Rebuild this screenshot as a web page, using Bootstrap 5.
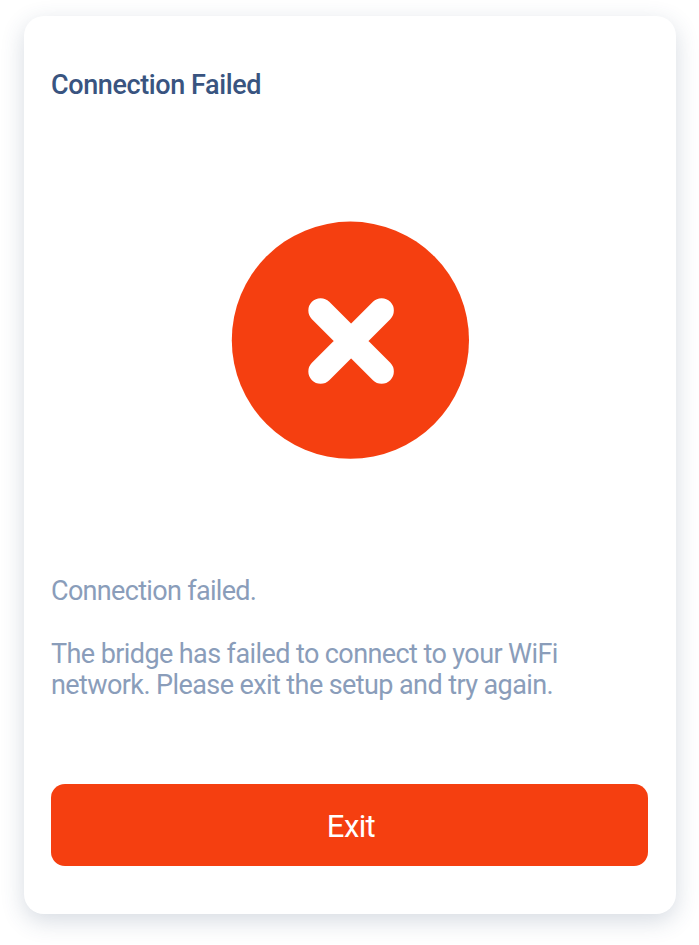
<!DOCTYPE html>
<html lang="en">
<head>
<meta charset="utf-8">
<meta name="viewport" content="width=device-width, initial-scale=1">
<title>Connection Failed</title>
<link href="https://cdn.jsdelivr.net/npm/bootstrap@5.3.0/dist/css/bootstrap.min.css" rel="stylesheet">
<style>
body{font-family:Roboto,sans-serif;background:#fff;height:945px;overflow:hidden;padding:15.5px 23.5px}
.dialog{width:652px;height:898px;border-radius:20px;padding:0 27.5px;box-shadow:0 7px 23px rgba(50,75,110,.2)}
.dialog-title{font-size:27px;line-height:32px;font-weight:500;color:#395480;margin-top:53.5px;letter-spacing:-.4px}
.status-icon{width:238px;height:238px;margin-top:119.5px}
.message{font-size:27px;line-height:31.5px;color:#8a9dba;margin-top:117px;letter-spacing:-.59px}
.message p:first-child{letter-spacing:-.68px}
.btn-exit{height:82px;border-radius:14px;background:#f53f10;color:#fff;font-size:31px;line-height:1;font-weight:400;margin-bottom:47.5px;padding:8px 10px 6px 13px;letter-spacing:-.6px}
.btn-exit:hover{background:#dd370c;color:#fff}
</style>
</head>
<body>
<main class="dialog bg-white d-flex flex-column">
<h1 class="dialog-title mb-0">Connection Failed</h1>
<svg class="status-icon d-block mx-auto flex-shrink-0" viewBox="0 0 238 238" role="img" aria-label="Failed"><circle cx="119.4" cy="119.2" r="118.6" fill="#f53f10"/><path d="M89.6 89.5L150.6 150.5M150.6 89.5L89.6 150.5" stroke="#fff" stroke-width="24.5" stroke-linecap="round"/></svg>
<div class="message"><p class="mb-0">Connection failed.</p><br><p class="mb-0">The bridge has failed to connect to your WiFi<br>network. Please exit the setup and try again.</p></div>
<button type="button" class="btn btn-exit w-100 border-0 mt-auto">Exit</button>
</main>
<script src="https://cdn.jsdelivr.net/npm/bootstrap@5.3.0/dist/js/bootstrap.bundle.min.js"></script>
</body>
</html>
